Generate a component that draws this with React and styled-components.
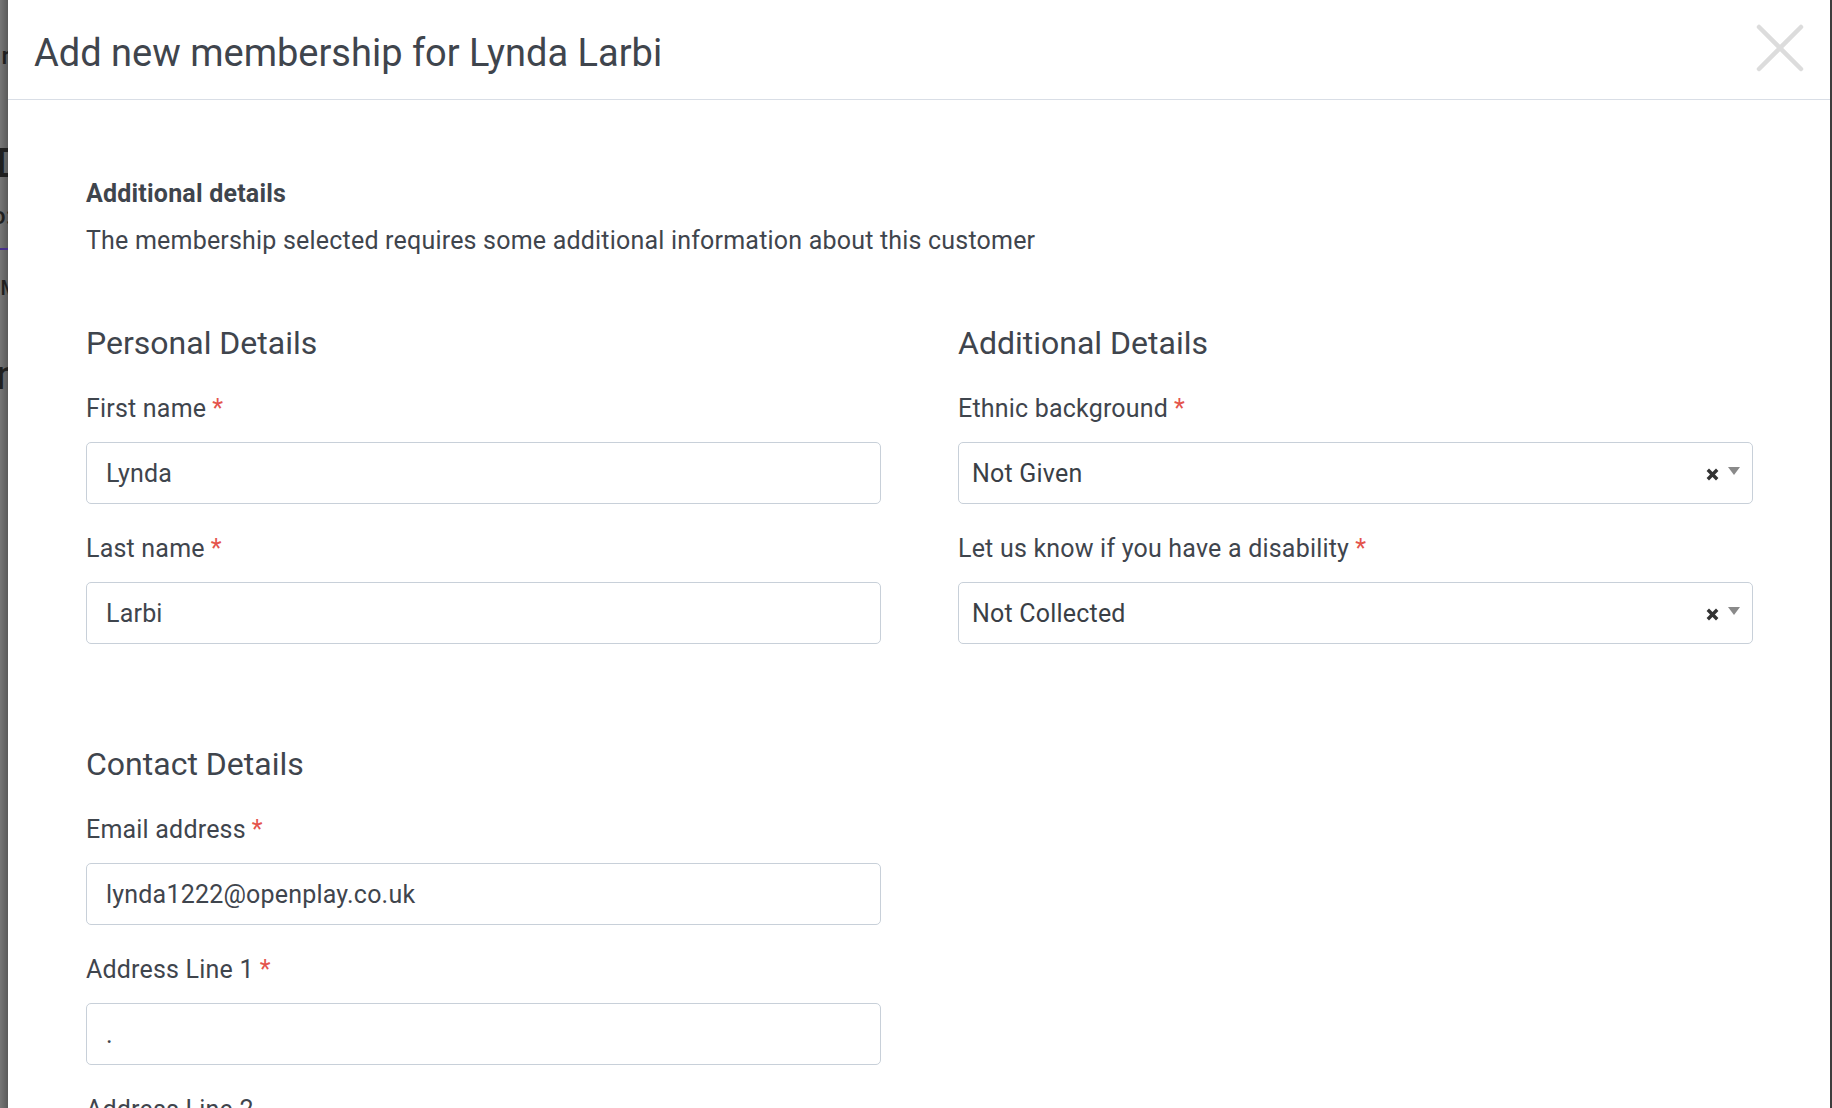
import React from 'react';
import styled, { createGlobalStyle } from 'styled-components';

const GlobalStyle = createGlobalStyle`
  html, body {
    margin: 0;
    padding: 0;
  }
  body {
    font-family: Roboto, "Liberation Sans", sans-serif;
    background: #4a4a4a;
  }
`;

const Screen = styled.div`
  display: flex;
  height: 1108px;
  overflow: hidden;
`;

// the dimmed page that peeks out left of the modal
const Backdrop = styled.div`
  width: 8px;
  flex-shrink: 0;
  overflow: hidden;
  background: linear-gradient(to right, #767676, #5a5a5a);
  display: flex;
  flex-direction: column;
  align-items: flex-end;
`;

const Peek = styled.span`
  display: block;
  font-size: ${p => p.size}px;
  line-height: 1;
  margin-top: ${p => p.top}px;
  margin-right: ${p => p.shift || 0}px;
  color: #1f1f1f;
  font-weight: 500;
  white-space: nowrap;
`;

const PeekRule = styled.div`
  flex-shrink: 0;
  width: 100%;
  height: 2px;
  margin-top: ${p => p.top}px;
  background: #47308a;
`;

const EdgeLine = styled.div`
  width: 2px;
  flex-shrink: 0;
  background: #3d3d3d;
`;

const Modal = styled.div`
  flex: 1;
  min-width: 0;
  background: #fff;
  display: flex;
  flex-direction: column;
  color: #3f454d;
`;

const Header = styled.div`
  height: 99px;
  flex-shrink: 0;
  border-bottom: 1px solid #d9dee6;
  display: flex;
  align-items: flex-start;
  justify-content: space-between;
  padding: 0 26px;
`;

const Title = styled.h1`
  margin: 30px 0 0;
  font-size: 38px;
  line-height: 46px;
  font-weight: 400;
  color: #3f454d;
`;

const CloseButton = styled.button`
  margin-top: 24px;
  width: 48px;
  height: 48px;
  padding: 0;
  border: 0;
  background: none;
  cursor: pointer;
`;

const Body = styled.div`
  padding: 80px 77px 0 78px;
  font-size: 25px;
  letter-spacing: 0.2px;
`;

const IntroTitle = styled.div`
  line-height: 28px;
  font-weight: 700;
`;

const IntroText = styled.p`
  margin: 19px 0 0;
  line-height: 28px;
`;

const Columns = styled.div`
  display: grid;
  grid-template-columns: 1fr 1fr;
  column-gap: 77px;
  margin-top: ${p => p.gap}px;
`;

const SectionTitle = styled.h2`
  margin: 0 0 32px;
  font-size: 32px;
  line-height: 38px;
  font-weight: 400;
  letter-spacing: 0;
`;

const FieldWrap = styled.div`
  margin-bottom: 30px;
`;

const Label = styled.label`
  display: block;
  line-height: 28px;
  padding-top: 1px;
  margin-bottom: 19px;
`;

const Star = styled.span`
  color: #e4544c;
  margin-left: 6px;
`;

const TextInput = styled.input`
  display: block;
  width: 100%;
  height: 62px;
  box-sizing: border-box;
  border: 1px solid #c8d0d9;
  border-radius: 5px;
  padding: 0 19px;
  font-family: inherit;
  font-size: 25px;
  letter-spacing: 0.2px;
  color: #3f454d;
  outline: none;
`;

const SelectBox = styled.div`
  height: 62px;
  box-sizing: border-box;
  border: 1px solid #c8d0d9;
  border-radius: 5px;
  padding: 0 12px 0 13px;
  display: flex;
  align-items: center;
  color: #3a3f46;
`;

const SelectValue = styled.span`
  flex: 1;
`;

const Clear = styled.svg`
  width: 13px;
  height: 13px;
  margin-top: 2px;
`;

const Caret = styled.span`
  width: 0;
  height: 0;
  margin-left: 9px;
  margin-top: -4px;
  border-left: 6px solid transparent;
  border-right: 6px solid transparent;
  border-top: 8px solid #8a8a8a;
`;

const Field = ({ label, required = true, children }) => (
  <FieldWrap>
    <Label>
      {label}
      {required && <Star>*</Star>}
    </Label>
    {children}
  </FieldWrap>
);

const Select = ({ value }) => (
  <SelectBox>
    <SelectValue>{value}</SelectValue>
    <Clear viewBox="0 0 13 13">
      <path d="M1.8 1.8 L11.2 11.2 M11.2 1.8 L1.8 11.2" stroke="#333" strokeWidth="3.4" />
    </Clear>
    <Caret />
  </SelectBox>
);

export default function App() {
  return (
    <Screen>
      <GlobalStyle />
      <Backdrop>
        <Peek size={24} top={44} shift={-2}>r</Peek>
        <Peek size={40} top={76} shift={-14}>D</Peek>
        <Peek size={24} top={20} shift={-4}>o:</Peek>
        <PeekRule top={20} />
        <Peek size={20} top={28} shift={-10}>M</Peek>
        <Peek size={40} top={58} shift={-10}>n</Peek>
      </Backdrop>
      <Modal>
        <Header>
          <Title>Add new membership for Lynda Larbi</Title>
          <CloseButton aria-label="Close">
            <svg width="48" height="48" viewBox="0 0 48 48">
              <path d="M3 3 L45 45 M45 3 L3 45" stroke="#dcdcdc" strokeWidth="4.5" strokeLinecap="round" />
            </svg>
          </CloseButton>
        </Header>
        <Body>
          <IntroTitle>Additional details</IntroTitle>
          <IntroText>The membership selected requires some additional information about this customer</IntroText>

          <Columns gap={69}>
            <div>
              <SectionTitle>Personal Details</SectionTitle>
              <Field label="First name">
                <TextInput value="Lynda" readOnly />
              </Field>
              <Field label="Last name">
                <TextInput value="Larbi" readOnly />
              </Field>
            </div>
            <div>
              <SectionTitle>Additional Details</SectionTitle>
              <Field label="Ethnic background">
                <Select value="Not Given" />
              </Field>
              <Field label="Let us know if you have a disability">
                <Select value="Not Collected" />
              </Field>
            </div>
          </Columns>

          <Columns gap={71}>
            <div>
              <SectionTitle>Contact Details</SectionTitle>
              <Field label="Email address">
                <TextInput value="lynda1222@openplay.co.uk" readOnly />
              </Field>
              <Field label="Address Line 1">
                <TextInput value="." readOnly />
              </Field>
              <Field label="Address Line 2" required={false}>
                <TextInput value="" readOnly />
              </Field>
            </div>
          </Columns>
        </Body>
      </Modal>
      <EdgeLine />
    </Screen>
  );
}
